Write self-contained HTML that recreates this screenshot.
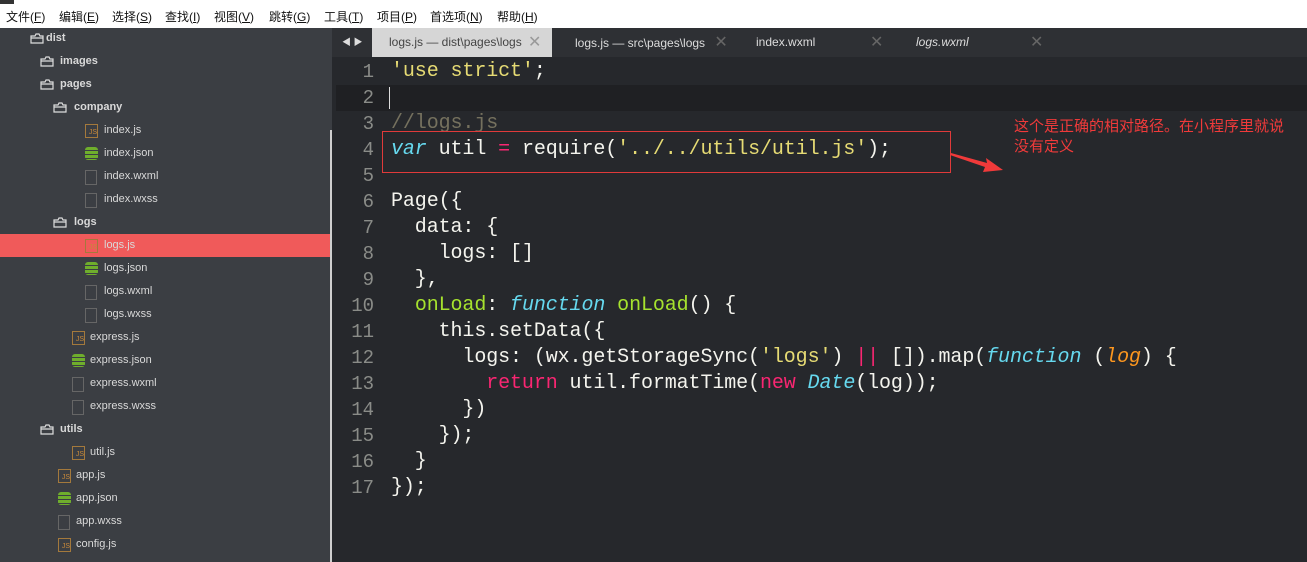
<!DOCTYPE html>
<html><head><meta charset="utf-8"><style>
body{margin:0;width:1307px;height:562px;overflow:hidden;background:#fff;position:relative;font-family:"Liberation Sans","Noto Sans CJK SC",sans-serif}
.title{position:absolute;left:0;top:0;width:1307px;height:6px;background:#fff}
.menu{position:absolute;left:0;top:6px;height:22px;width:1307px;background:#fff;font-size:12px;line-height:22px;color:#111}
.menu span{position:absolute;top:0}
.side{position:absolute;left:0;top:28px;width:336px;height:534px;background:#3b3e43}
.sb{position:absolute;left:330px;top:130px;width:2px;height:432px;background:#cfcfcf}
.it{position:absolute;font-size:11px;color:#d9d9d9;height:22px;line-height:22px;white-space:nowrap}
.b{font-weight:bold}
.hl{position:absolute;left:0;top:234px;width:330px;height:23px;background:#f05a5a}
.tabs{position:absolute;left:332px;top:28px;width:975px;height:29px;background:#2e3034}
.tab{position:absolute;top:0;height:29px;line-height:29px;font-size:12px;color:#dcdcdc}
.ed{position:absolute;left:332px;top:57px;width:975px;height:505px;background:#26282c}
.ln{position:absolute;left:336px;width:38px;text-align:right;font-family:"Liberation Mono",monospace;font-size:19px;color:#8a8c88;height:26px;line-height:26px}
.cd{position:absolute;left:391px;font-family:"Liberation Mono",monospace;font-size:20px;letter-spacing:-0.1px;color:#f4f4ee;height:26px;line-height:26px;white-space:pre}
.s{color:#e6db74}.k{color:#66d9ef;font-style:italic}.o{color:#f92672}.g{color:#a6e22e}.c{color:#75715e}.p{color:#fd971f;font-style:italic}
</style></head><body>
<div class="title"><div style="position:absolute;left:0;top:0;width:14px;height:4px;background:#333"></div></div>
<div class="menu">
<span style="left:6px">文件(<u>F</u>)</span><span style="left:59px">编辑(<u>E</u>)</span><span style="left:112px">选择(<u>S</u>)</span><span style="left:165px">查找(<u>I</u>)</span><span style="left:214px">视图(<u>V</u>)</span><span style="left:269px">跳转(<u>G</u>)</span><span style="left:324px">工具(<u>T</u>)</span><span style="left:377px">项目(<u>P</u>)</span><span style="left:430px">首选项(<u>N</u>)</span><span style="left:497px">帮助(<u>H</u>)</span>
</div>
<div class="side"></div>
<div class="ed"></div>
<div class="hl"></div>
<div class="sb"></div>
<div id="tree"></div>
<div class="tabs">
<div style="position:absolute;left:10px;top:0;line-height:29px;font-size:9px;color:#ddd">◀ ▶</div>
<div class="tab" style="left:40px;width:180px;background:#d6d6d6;color:#444;padding-left:17px;box-sizing:border-box">logs.js — dist\pages\logs <span style="position:absolute;left:156px;color:#999;font-size:16px">✕</span></div>
<div class="tab" style="left:243px">logs.js — src\pages\logs <span style="color:#666;font-size:16px;margin-left:6px">✕</span></div>
<div class="tab" style="left:424px">index.wxml</div><div class="tab" style="left:538px;color:#666;font-size:16px">✕</div>
<div class="tab" style="left:584px;font-style:italic">logs.wxml</div><div class="tab" style="left:698px;color:#666;font-size:16px">✕</div>
</div>
<div style="position:absolute;left:336px;top:85px;width:971px;height:26px;background:#1f2023"></div>
<div style="position:absolute;left:389px;top:87px;width:1px;height:22px;background:#ddd"></div>
<div id="code"></div>
<div style="position:absolute;left:382px;top:131px;width:569px;height:42px;border:1px solid #e03a3a;box-sizing:border-box"></div>
<svg style="position:absolute;left:945px;top:145px" width="65" height="35"><polygon points="6,8 42,18 41,13 58,25 38,27 40,22 5,10" fill="#f03a3a"/></svg>
<div style="position:absolute;left:1014px;top:117px;font-size:15px;line-height:20px;color:#f03a3a;font-family:'Liberation Sans','Noto Sans CJK SC',sans-serif;white-space:nowrap">这个是正确的相对路径。在小程序里就说<br>没有定义</div>
<script>
var T=[[0,30,46,"dist","f"],[0,40,60,"images","f"],[0,40,60,"pages","f"],[0,53,74,"company","f"],[0,85,104,"index.js","js"],[0,85,104,"index.json","db"],[0,85,104,"index.wxml","d"],[0,85,104,"index.wxss","d"],[0,53,74,"logs","f"],[0,85,104,"logs.js","js"],[0,85,104,"logs.json","db"],[0,85,104,"logs.wxml","d"],[0,85,104,"logs.wxss","d"],[0,72,90,"express.js","js"],[0,72,90,"express.json","db"],[0,72,90,"express.wxml","d"],[0,72,90,"express.wxss","d"],[0,40,60,"utils","f"],[0,72,90,"util.js","js"],[0,58,76,"app.js","js"],[0,58,76,"app.json","db"],[0,58,76,"app.wxss","d"],[0,58,76,"config.js","js"]];
var h="";T.forEach(function(t,i){var y=27+i*23;var ic="";
if(t[4]=="f")ic='<svg style="position:absolute;left:'+t[1]+'px;top:'+(y+6)+'px" width="14" height="11"><path d="M1 3h4l1-2h3l1 2h3v7H1z M1 5h12" fill="none" stroke="#ddd" stroke-width="1.2"/></svg>';
else if(t[4]=="js")ic='<div style="position:absolute;left:'+t[1]+'px;top:'+(y+5)+'px;width:11px;height:12px;border:1px solid #a4793c;font-size:7px;color:#c8893a;line-height:16px;text-align:right">JS</div>';
else if(t[4]=="db")ic='<div style="position:absolute;left:'+t[1]+'px;top:'+(y+5)+'px;width:13px;height:13px;border-radius:3px;background:repeating-linear-gradient(#6fae2c 0 3px,#3b3e43 3px 4px)"></div>';
else ic='<div style="position:absolute;left:'+t[1]+'px;top:'+(y+5)+'px;width:10px;height:13px;border:1px solid #666"></div>';
h+=ic+'<div class="it'+(t[4]=="f"?" b":"")+'" style="left:'+t[2]+'px;top:'+y+'px">'+t[3]+'</div>';});
document.getElementById("tree").innerHTML=h;
var L=['<span class="s">\'use strict\'</span>;','','<span class="c">//logs.js</span>','<span class="k">var</span> util <span class="o">=</span> require(<span class="s">\'../../utils/util.js\'</span>);','','Page({','  data: {','    logs: []','  },','  <span class="g">onLoad</span>: <span class="k">function</span> <span class="g">onLoad</span>() {','    this.setData({','      logs: (wx.getStorageSync(<span class="s">\'logs\'</span>) <span class="o">||</span> []).map(<span class="k">function</span> (<span class="p">log</span>) {','        <span class="o">return</span> util.formatTime(<span class="o">new</span> <span class="k">Date</span>(log));','      })','    });','  }','});'];
var c="";L.forEach(function(l,i){var y=59+i*26;c+='<div class="ln" style="top:'+y+'px">'+(i+1)+'</div><div class="cd" style="top:'+y+'px">'+l+'</div>';});
document.getElementById("code").innerHTML=c;
</script>
</body></html>
